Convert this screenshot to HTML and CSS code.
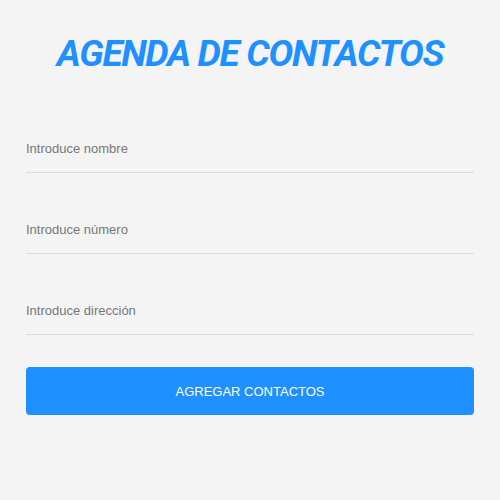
FILE: index.html
```html
<!DOCTYPE html>
<html lang="es">
<head>
<meta charset="utf-8">
<title>Agenda de contactos</title>
<link rel="stylesheet" href="styles.css">
</head>
<body>
<main class="app">
  <h1 class="title">AGENDA DE CONTACTOS</h1>
  <form class="form">
    <input class="field" type="text" placeholder="Introduce nombre">
    <input class="field" type="text" placeholder="Introduce número">
    <input class="field" type="text" placeholder="Introduce dirección">
    <button class="btn" type="button">AGREGAR CONTACTOS</button>
  </form>
</main>
</body>
</html>
```
FILE: styles.css
```css
html, body {
  margin: 0;
  padding: 0;
  background: #f4f4f4;
  height: 100%;
}
.app {
  padding: 31px 26px 0;
  font-family: "Liberation Sans", Arial, sans-serif;
}
.title {
  margin: 0;
  text-align: center;
  font-family: "Roboto", sans-serif;
  font-style: italic;
  font-weight: 700;
  font-size: 37px;
  letter-spacing: -1.3px;
  line-height: 46px;
  color: #1e90ff;
}
.form {
  display: flex;
  flex-direction: column;
  gap: 36px;
  margin-top: 51px;
}
.field {
  box-sizing: border-box;
  height: 45px;
  width: 100%;
  border: none;
  border-bottom: 1px solid #dcdcdc;
  background: transparent;
  padding: 0 0 4px;
  font-family: "Liberation Sans", Arial, sans-serif;
  font-size: 13px;
  color: #333;
  outline: none;
}
.field::placeholder {
  color: #777;
}
.btn {
  height: 48px;
  border: none;
  border-radius: 4px;
  background: #1e90ff;
  color: #fff;
  font-family: "Liberation Sans", Arial, sans-serif;
  font-size: 13px;
  margin-top: -4px;
}
```
